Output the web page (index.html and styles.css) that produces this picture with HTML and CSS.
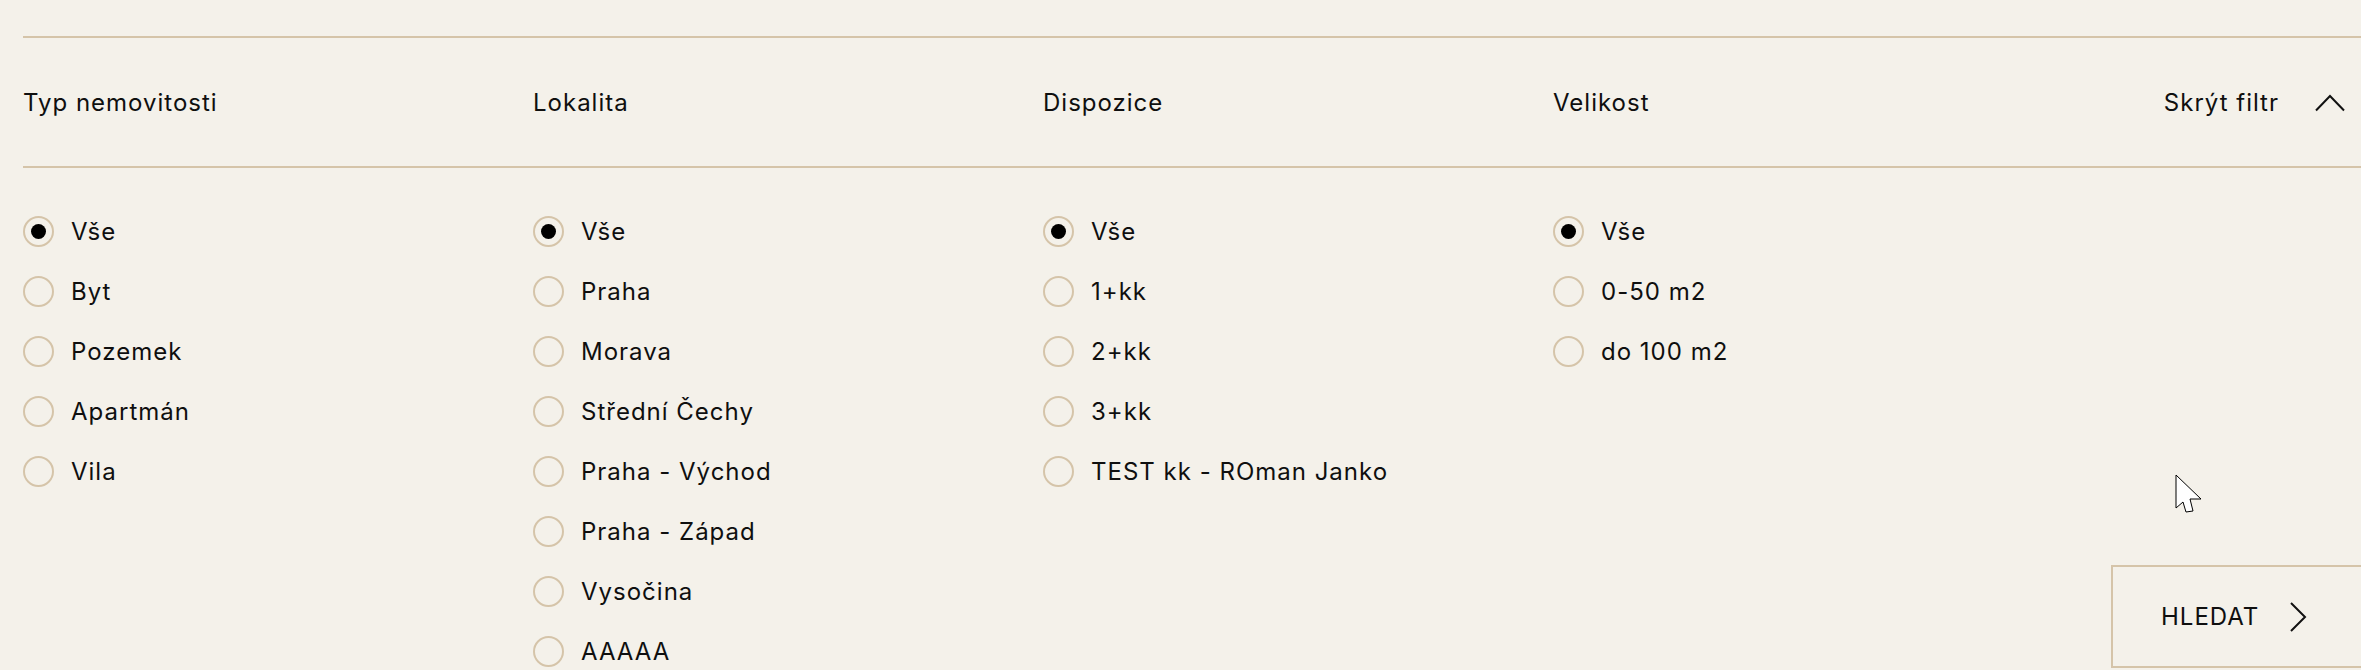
FILE: index.html
```html
<!DOCTYPE html>
<html lang="cs">
<head>
    <meta charset="UTF-8">
    <meta name="viewport" content="width=device-width, initial-scale=1.0">
    <title>Filtr nemovitostí</title>
    <link rel="stylesheet" href="styles.css">
</head>
<body>
    <div class="filter">
        <div class="filter-head">
            <div class="head-col">Typ nemovitosti</div>
            <div class="head-col">Lokalita</div>
            <div class="head-col">Dispozice</div>
            <div class="head-col">Velikost</div>
            <button class="toggle" type="button">
                Skrýt filtr
                <svg width="30" height="20" viewBox="0 0 30 20"><polyline points="1,18.5 15,4 29,18.5" fill="none" stroke="#111" stroke-width="2"/></svg>
            </button>
        </div>

        <form class="filter-body">
            <div class="options">
                <label class="option"><span class="radio checked"></span>Vše</label>
                <label class="option"><span class="radio"></span>Byt</label>
                <label class="option"><span class="radio"></span>Pozemek</label>
                <label class="option"><span class="radio"></span>Apartmán</label>
                <label class="option"><span class="radio"></span>Vila</label>
            </div>
            <div class="options">
                <label class="option"><span class="radio checked"></span>Vše</label>
                <label class="option"><span class="radio"></span>Praha</label>
                <label class="option"><span class="radio"></span>Morava</label>
                <label class="option"><span class="radio"></span>Střední Čechy</label>
                <label class="option"><span class="radio"></span>Praha - Východ</label>
                <label class="option"><span class="radio"></span>Praha - Západ</label>
                <label class="option"><span class="radio"></span>Vysočina</label>
                <label class="option"><span class="radio"></span>AAAAA</label>
            </div>
            <div class="options">
                <label class="option"><span class="radio checked"></span>Vše</label>
                <label class="option"><span class="radio"></span>1+kk</label>
                <label class="option"><span class="radio"></span>2+kk</label>
                <label class="option"><span class="radio"></span>3+kk</label>
                <label class="option"><span class="radio"></span>TEST kk - ROman Janko</label>
            </div>
            <div class="options">
                <label class="option"><span class="radio checked"></span>Vše</label>
                <label class="option"><span class="radio"></span>0-50 m2</label>
                <label class="option"><span class="radio"></span>do 100 m2</label>
            </div>
            <div class="search-col">
                <button class="search" type="submit">
                    HLEDAT
                    <svg width="20" height="30" viewBox="0 0 20 30"><polyline points="2,1 16,15 2,29" fill="none" stroke="#111" stroke-width="2"/></svg>
                </button>
            </div>
        </form>
    </div>

    <svg class="cursor" width="28" height="40" viewBox="0 0 28 40">
        <polygon points="1,1 1,34 8,28 11,38 18,37 15,25 26,25" fill="#fff" stroke="#000" stroke-width="1"/>
    </svg>
</body>
</html>
```

FILE: styles.css
```css
* {
    margin: 0;
    padding: 0;
    box-sizing: border-box;
}

body {
    background: #f4f1ea;
    color: #0f0f0f;
    font-family: 'Inter', 'Liberation Sans', sans-serif;
    font-size: 24px;
    letter-spacing: 1px;
    overflow: hidden;
    position: relative;
    min-height: 670px;
}

.filter {
    padding: 36px 0 0 23px;
}

.filter-head {
    display: grid;
    grid-template-columns: repeat(4, 510px) 1fr;
    align-items: center;
    height: 132px;
    border-top: 2px solid #d5c4a9;
    border-bottom: 2px solid #d5c4a9;
}

.toggle {
    justify-self: end;
    display: flex;
    align-items: center;
    gap: 36px;
    margin-right: 16px;
    background: none;
    border: none;
    font: inherit;
    letter-spacing: inherit;
    color: inherit;
    cursor: pointer;
}

.filter-body {
    display: grid;
    grid-template-columns: repeat(4, 510px) 1fr;
    padding-top: 48px;
}

.options {
    display: flex;
    flex-direction: column;
    gap: 29px;
}

.option {
    display: flex;
    align-items: center;
    gap: 17px;
    cursor: pointer;
}

.radio {
    width: 31px;
    height: 31px;
    border: 2px solid #d5c4a9;
    border-radius: 50%;
    display: flex;
    align-items: center;
    justify-content: center;
    flex-shrink: 0;
}

.radio.checked::after {
    content: "";
    width: 15px;
    height: 15px;
    border-radius: 50%;
    background: #000;
}

.search-col {
    padding: 349px 0 0 48px;
}

.search {
    display: flex;
    align-items: center;
    gap: 30px;
    width: 300px;
    height: 103px;
    padding: 0 48px;
    background: none;
    border: 2px solid #d5c4a9;
    font: inherit;
    letter-spacing: 1px;
    color: inherit;
    cursor: pointer;
}

.cursor {
    position: absolute;
    left: 2175px;
    top: 474px;
}
```
